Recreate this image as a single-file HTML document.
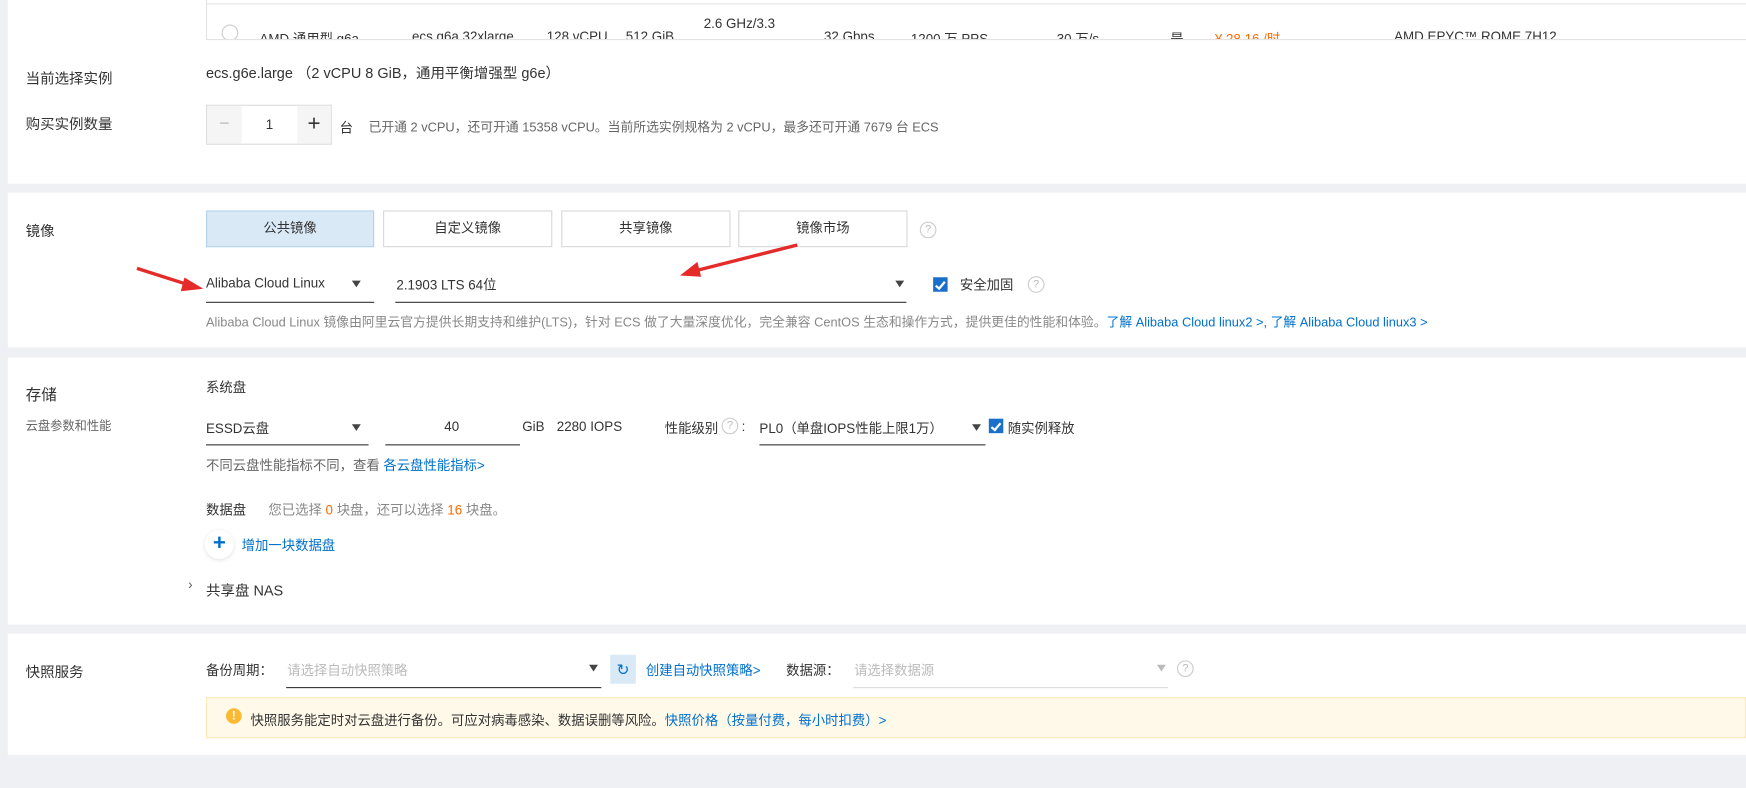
<!DOCTYPE html>
<html><head><meta charset="utf-8">
<style>
*{margin:0;padding:0;box-sizing:border-box}
html,body{width:1746px;height:788px;overflow:hidden;background:#eff0f4}
#w{position:absolute;left:0;top:0;width:1568px;height:708px;transform:scale(1.11352);transform-origin:0 0;font-family:"Liberation Sans","Noto Sans CJK SC",sans-serif;color:#333;font-size:12px}
.a{position:absolute;white-space:nowrap}
.p{position:absolute;left:7px;width:1561px;background:#fff}
.lbl{font-size:13px;color:#333}
.g{color:#666}
.b{color:#0070cc}
.o{color:#ff6a00}
.ul{position:absolute;height:1px;background:#333}
.arr{position:absolute;width:0;height:0;border-left:4px solid transparent;border-right:4px solid transparent;border-top:6px solid #444}
.chk{position:absolute;width:13px;height:13px;background:#1a6fc9}
.chk:after{content:"";position:absolute;left:4px;top:1.5px;width:3px;height:7px;border:solid #fff;border-width:0 2px 2px 0;transform:rotate(40deg)}
.q{position:absolute;width:15px;height:15px;border:1px solid #ccc;border-radius:50%;color:#bbb;font-size:10px;text-align:center;line-height:13px}
.btn{position:absolute;top:189px;height:33px;border:1px solid #d7d8d9;text-align:center;line-height:31px;font-size:12px;color:#333;background:#fff}
</style></head><body><div id="w">
<div class="p" style="top:0;height:165px"></div>
<div class="p" style="top:173px;height:139px"></div>
<div class="p" style="top:321px;height:240px"></div>
<div class="p" style="top:569px;height:109px"></div>

<div class="a" style="left:185px;top:0;width:1383px;height:36px;border-left:1px solid #e3e3e3;border-bottom:1px solid #e3e3e3;overflow:hidden">
 <div style="position:absolute;left:0;right:0;top:3px;height:1px;background:#e3e3e3"></div>
 <div style="position:absolute;left:13px;top:22px;width:15px;height:15px;border:1px solid #ccc;border-radius:50%"></div>
 <div class="a" style="left:47px;top:26px;font-size:12px">AMD 通用型 g6a</div>
 <div class="a" style="left:184px;top:26px">ecs.g6a.32xlarge</div>
 <div class="a" style="left:305px;top:26px">128 vCPU</div>
 <div class="a" style="left:376px;top:26px">512 GiB</div>
 <div class="a" style="left:446px;top:14px">2.6 GHz/3.3</div>
 <div class="a" style="left:554px;top:26px">32 Gbps</div>
 <div class="a" style="left:632px;top:26px">1200 万 PPS</div>
 <div class="a" style="left:763px;top:26px">30 万/s</div>
 <div class="a" style="left:865px;top:26px">是</div>
 <div class="a o" style="left:905px;top:26px">¥ 28.16 /时</div>
 <div class="a" style="left:1066px;top:26px">AMD EPYC™ ROME 7H12</div>
</div>

<div class="a lbl" style="left:23px;top:60px">当前选择实例</div>
<div class="a" style="left:185px;top:55px;font-size:13px">ecs.g6e.large （2 vCPU 8 GiB，通用平衡增强型 g6e）</div>
<div class="a lbl" style="left:23px;top:101px">购买实例数量</div>
<div class="a" style="left:185px;top:94px;width:113px;height:36px;border:1px solid #dcdcdc">
 <div style="position:absolute;left:0;top:0;width:31px;height:34px;background:#f5f5f6;color:#bbb;text-align:center;line-height:34px;font-size:16px">−</div>
 <div style="position:absolute;left:31px;width:50px;top:0;height:34px;text-align:center;line-height:34px;font-size:12px">1</div>
 <div style="position:absolute;left:81px;top:0;width:30px;height:34px;background:#f5f5f6;text-align:center;line-height:32px;font-size:20px;color:#333">+</div>
</div>
<div class="a" style="left:305px;top:106px">台</div>
<div class="a g" style="left:331px;top:106px;font-size:11.5px">已开通 2 vCPU，还可开通 15358 vCPU。当前所选实例规格为 2 vCPU，最多还可开通 7679 台 ECS</div>

<div class="a lbl" style="left:23px;top:197px">镜像</div>
<div class="btn" style="left:185px;width:151px;background:#d9e9f6;border-color:#b3d4ee">公共镜像</div>
<div class="btn" style="left:344px;width:152px">自定义镜像</div>
<div class="btn" style="left:504px;width:152px">共享镜像</div>
<div class="btn" style="left:663px;width:152px">镜像市场</div>
<div class="q" style="left:826px;top:199px">?</div>
<div class="a" style="left:185px;top:247px">Alibaba Cloud Linux</div>
<div class="arr" style="left:316px;top:252px"></div>
<div class="ul" style="left:185px;top:271px;width:151px"></div>
<div class="a" style="left:356px;top:247px">2.1903 LTS 64位</div>
<div class="arr" style="left:804px;top:252px"></div>
<div class="ul" style="left:355px;top:271px;width:459px"></div>
<div class="chk" style="left:838px;top:249px"></div>
<div class="a" style="left:862px;top:247px">安全加固</div>
<div class="q" style="left:923px;top:248px">?</div>
<div class="a" style="left:185px;top:281px;font-size:11.5px;color:#888">Alibaba Cloud Linux 镜像由阿里云官方提供长期支持和维护(LTS)，针对 ECS 做了大量深度优化，完全兼容 CentOS 生态和操作方式，提供更佳的性能和体验。<span class="b">了解 Alibaba Cloud linux2 &gt;, 了解 Alibaba Cloud linux3 &gt;</span></div>
<svg class="a" style="left:0;top:0" width="900" height="300"><g stroke="#e52a2a" stroke-width="3" fill="#e52a2a">
<line x1="123" y1="241" x2="170" y2="256"/><polygon points="181,259 166,250 163,261" stroke-width="1"/>
<line x1="716" y1="220" x2="625" y2="243"/><polygon points="612,247 626,236 629,248" stroke-width="1"/></g></svg>

<div class="a" style="left:23px;top:344px;font-size:14px">存储</div>
<div class="a" style="left:23px;top:374px;font-size:11px;color:#666">云盘参数和性能</div>
<div class="a" style="left:185px;top:339px">系统盘</div>
<div class="a" style="left:185px;top:376px">ESSD云盘</div>
<div class="arr" style="left:316px;top:381px"></div>
<div class="ul" style="left:185px;top:399px;width:146px"></div>
<div class="a" style="left:399px;top:376px">40</div>
<div class="ul" style="left:346px;top:399px;width:121px"></div>
<div class="a" style="left:469px;top:376px">GiB</div>
<div class="a" style="left:500px;top:376px">2280 IOPS</div>
<div class="a" style="left:597px;top:376px">性能级别</div>
<div class="q" style="left:648px;top:375px">?</div>
<div class="a" style="left:666px;top:376px">:</div>
<div class="a" style="left:682px;top:376px">PL0（单盘IOPS性能上限1万）</div>
<div class="arr" style="left:873px;top:381px"></div>
<div class="ul" style="left:682px;top:399px;width:203px"></div>
<div class="chk" style="left:888px;top:376px"></div>
<div class="a" style="left:905px;top:376px">随实例释放</div>
<div class="a g" style="left:185px;top:409px">不同云盘性能指标不同，查看 <span class="b">各云盘性能指标&gt;</span></div>
<div class="a" style="left:185px;top:449px">数据盘</div>
<div class="a" style="left:241px;top:449px;color:#888">您已选择 <span class="o">0</span> 块盘，还可以选择 <span class="o">16</span> 块盘。</div>
<div class="a" style="left:184px;top:476px;width:26px;height:26px;border-radius:50%;box-shadow:0 1px 4px rgba(0,0,0,.12);color:#0070cc;text-align:center;line-height:24px;font-size:20px;font-weight:bold">+</div>
<div class="a b" style="left:217px;top:481px">增加一块数据盘</div>
<div class="a" style="left:169px;top:518px;font-size:12px;color:#555">›</div>
<div class="a" style="left:185px;top:520px;font-size:13px">共享盘 NAS</div>

<div class="a lbl" style="left:23px;top:593px">快照服务</div>
<div class="a" style="left:185px;top:593px">备份周期：</div>
<div class="a" style="left:258px;top:593px;color:#bbb">请选择自动快照策略</div>
<div class="arr" style="left:529px;top:597px"></div>
<div class="ul" style="left:257px;top:617px;width:283px"></div>
<div class="a" style="left:548px;top:588px;width:23px;height:26px;background:#d9e9f6;color:#0070cc;text-align:center;line-height:26px;font-size:14px">↻</div>
<div class="a b" style="left:580px;top:593px">创建自动快照策略&gt;</div>
<div class="a" style="left:706px;top:593px">数据源：</div>
<div class="a" style="left:767px;top:593px;color:#bbb">请选择数据源</div>
<div class="arr" style="left:1039px;top:597px;border-top-color:#bbb"></div>
<div class="ul" style="left:766px;top:617px;width:283px;background:#ddd"></div>
<div class="q" style="left:1057px;top:593px">?</div>
<div class="a" style="left:185px;top:626px;width:1383px;height:37px;background:#fff9ea;border:1px solid #fbe9b8">
 <div style="position:absolute;left:17px;top:9px;width:14px;height:14px;border-radius:50%;background:#fcb831;color:#fff;text-align:center;font-size:11px;line-height:14px;font-weight:bold">!</div>
 <div class="a" style="left:39px;top:11px">快照服务能定时对云盘进行备份。可应对病毒感染、数据误删等风险。<span class="b">快照价格（按量付费，每小时扣费）&gt;</span></div>
</div>
</div></body></html>
